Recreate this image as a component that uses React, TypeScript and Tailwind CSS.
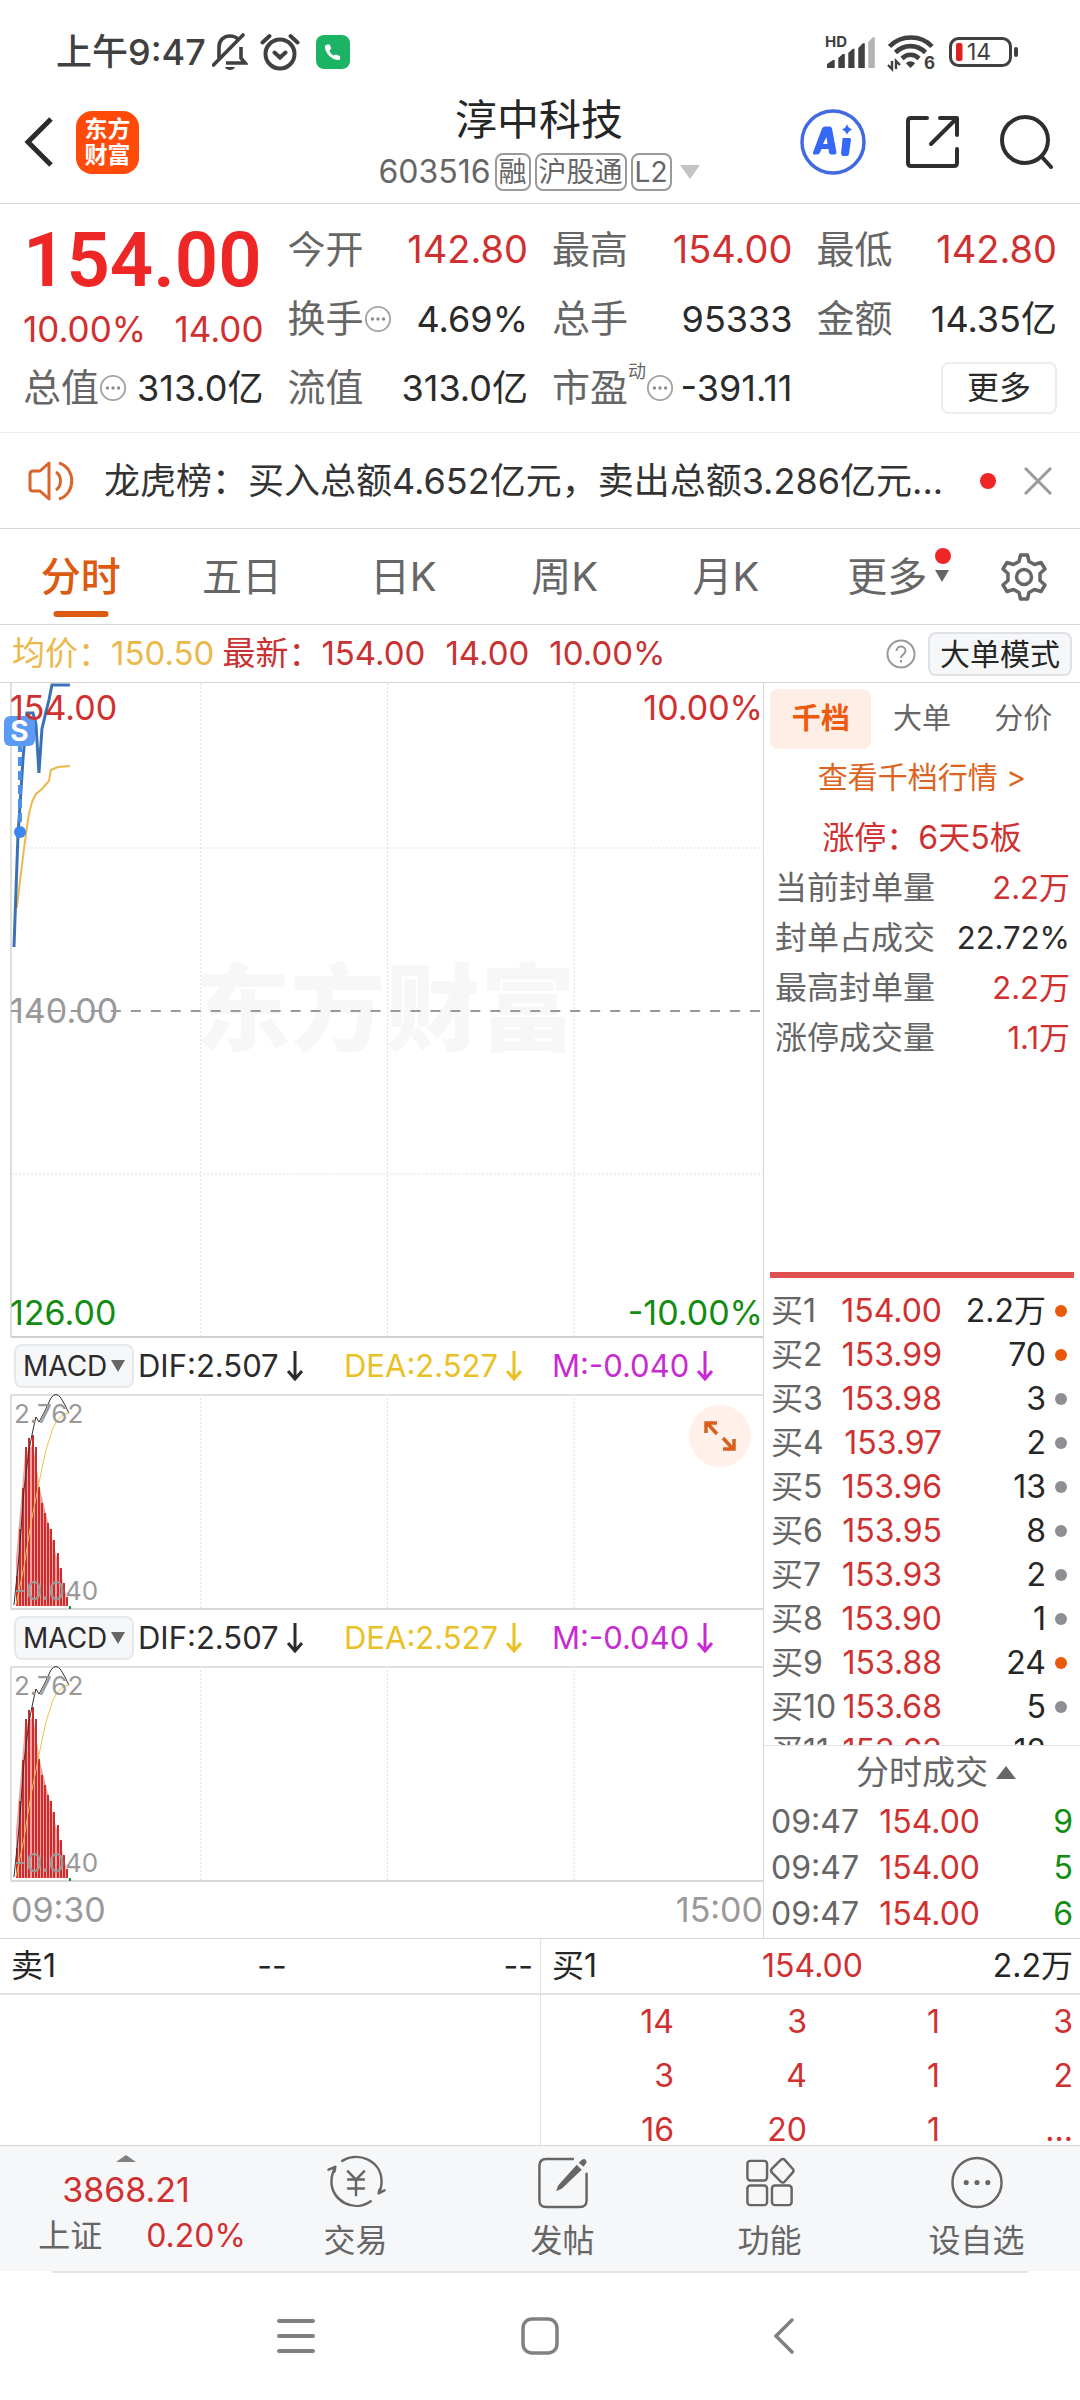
import { useState } from "react";
import type { ReactNode } from "react";
import clsx from "clsx";

const PERIODS = ["分时", "五日", "日K", "周K", "月K"];

const SEAL_STATS = [
  { label: "当前封单量", value: "2.2万", up: true },
  { label: "封单占成交", value: "22.72%", up: false },
  { label: "最高封单量", value: "2.2万", up: true },
  { label: "涨停成交量", value: "1.1万", up: true },
];

const BIDS = [
  { level: "买1", price: "154.00", volume: "2.2万", big: true },
  { level: "买2", price: "153.99", volume: "70", big: true },
  { level: "买3", price: "153.98", volume: "3", big: false },
  { level: "买4", price: "153.97", volume: "2", big: false },
  { level: "买5", price: "153.96", volume: "13", big: false },
  { level: "买6", price: "153.95", volume: "8", big: false },
  { level: "买7", price: "153.93", volume: "2", big: false },
  { level: "买8", price: "153.90", volume: "1", big: false },
  { level: "买9", price: "153.88", volume: "24", big: true },
  { level: "买10", price: "153.68", volume: "5", big: false },
  { level: "买11", price: "153.63", volume: "12", big: false },
];

const TRADES = [
  { time: "09:47", price: "154.00", volume: "9" },
  { time: "09:47", price: "154.00", volume: "5" },
  { time: "09:47", price: "154.00", volume: "6" },
];

const QUEUE = [
  ["14", "3", "1", "3"],
  ["3", "4", "1", "2"],
  ["16", "20", "1", "..."],
];

// top edge of each MACD bar, baseline is at 212
const MACD_BARS = [
  182, 135, 94, 53, 44, 41, 53, 93, 109, 119, 129, 135, 146, 159, 174, 189, 203,
];

function MoreInfo() {
  return (
    <svg viewBox="0 0 30 30" className="h-7 w-7 shrink-0" aria-hidden="true">
      <circle cx="15" cy="15" r="13" fill="none" stroke="#a3a3a3" strokeWidth="2" />
      <g fill="#8c8c8c">
        <circle cx="9" cy="15" r="1.8" />
        <circle cx="15" cy="15" r="1.8" />
        <circle cx="21" cy="15" r="1.8" />
      </g>
    </svg>
  );
}

function StatusBar() {
  return (
    <div className="flex h-[94px] items-center justify-between pt-[10px] pr-[61px] pl-14 text-[#404040]">
      <div className="flex items-center">
        <span className="text-[36px] leading-10 font-medium">上午9:47</span>
        <svg viewBox="0 0 36 38" className="ml-[6px] h-[38px] w-9" fill="none" stroke="#404040" strokeWidth="3.6" aria-hidden="true">
          <path d="M7 25V14C7 7 12 3 18 3c3 0 6 1 8 3" />
          <path d="M29 14v11l4 5H14" />
          <path d="M1.5 32 31 2" strokeLinecap="round" />
          <path d="M13 34h10c-1 4-9 4-10 0z" fill="#404040" stroke="none" />
        </svg>
        <svg viewBox="0 0 40 38" className="ml-3 h-[38px] w-10" fill="none" stroke="#404040" strokeWidth="4" strokeLinecap="round" aria-hidden="true">
          <circle cx="20" cy="21" r="14.5" />
          <path d="m14.5 19.500 5.500 5 5.500-5M2.500 9.500 9.500 3M37.500 9.500 30.500 3" />
        </svg>
        <svg viewBox="0 0 34 34" className="ml-4 h-[34px] w-[34px]" aria-hidden="true">
          <rect width="34" height="34" rx="8" fill="#1cb464" />
          <path d="M9 11.500c-.5 6 7 14 14 13.500 1.500-.5 1.500-3 .7-4l-3.700-1.500-2.500 1c-2-1-3.500-3-4-5l1.700-2-1.200-3.500c-1-1-4.500-.5-5 1.500z" fill="#fff" />
        </svg>
      </div>
      <div className="flex items-center">
        <svg viewBox="0 0 50 34" className="h-[34px] w-[50px] overflow-visible" fill="#404040" aria-hidden="true">
          <text x="0" y="12" fontSize="15" fontWeight="700">HD</text>
          <path d="M2 33v-4l6-4h1.700v8zM13.300 33V23l4.500-4h2v14zM23.300 33V18l4.500-4.300h1.700V33zM33.300 33V13l4.500-4.700h2V33z" />
          <path d="M43.300 33V7l4.500-4.700h2V33z" fill="#b3b3b3" />
        </svg>
        <svg viewBox="0 0 48 36" className="ml-3 h-9 w-12 overflow-visible" fill="none" stroke="#404040" strokeWidth="4.600" aria-hidden="true">
          <path d="M2.500 12.500C14 .5 34 .5 45 12.500" />
          <path d="M8.500 18.500C17 10 30 10 38.500 18.500" />
          <path d="M15 24.500c5-5 12-5 17 0" />
          <path d="m23.500 34-4.500-4.500c2-3 7-3 9 0z" fill="#404040" stroke="none" />
          <path d="M5 27v8L1 31M9 35v-8l4 4" strokeWidth="2.400" />
          <text x="37" y="35" fontSize="17" fontWeight="700" fill="#404040" stroke="none">6</text>
        </svg>
        <svg viewBox="0 0 70 32" className="ml-[14px] h-8 w-[70px]" aria-hidden="true">
          <rect x="1.500" y="2.500" width="60" height="27" rx="8" fill="none" stroke="#404040" strokeWidth="3" />
          <rect x="65" y="11" width="4" height="10" rx="2" fill="#404040" />
          <rect x="7" y="7" width="6.500" height="18" rx="2" fill="#e02020" />
          <text x="18" y="24" fontSize="23" fill="#404040">14</text>
        </svg>
      </div>
    </div>
  );
}

function Header() {
  return (
    <header className="grid grid-cols-[1fr_auto_1fr] border-b border-[#d6d6d6] pr-[26px] pb-[5px] pl-6">
      <div className="flex h-24 items-center gap-[22px]">
        <button aria-label="返回">
          <svg viewBox="0 0 30 52" className="h-[52px] w-[30px]" fill="none" stroke="#2b2b2b" strokeWidth="5">
            <path d="M27 3 4 26l23 23" />
          </svg>
        </button>
        <button className="flex h-[63px] w-[63px] flex-col items-center justify-center rounded-2xl bg-[#ff4a0a] text-[23px] leading-[26px] font-bold text-white">
          <span>东方</span>
          <span>财富</span>
        </button>
      </div>
      <div className="flex flex-col items-center">
        <h1 className="text-[42px] leading-[52px] text-[#262626]">淳中科技</h1>
        <div className="flex h-[52px] items-center gap-1 text-[#666666]">
          <span className="text-[32px] leading-10">603516</span>
          {["融", "沪股通", "L2"].map((tag) => (
            <span key={tag} className="rounded-lg border-2 border-[#9a9a9a] px-[2px] text-[28px] leading-[34px]">
              {tag}
            </span>
          ))}
          <svg viewBox="0 0 20 14" className="ml-1 h-[14px] w-5" aria-hidden="true">
            <path d="M0 0h20L10 14z" fill="#c4c4c4" />
          </svg>
        </div>
      </div>
      <div className="flex h-24 items-center justify-end gap-10">
        <button aria-label="AI">
          <svg viewBox="0 0 66 66" className="h-[66px] w-[66px]" fill="#3568f5">
            <circle cx="33" cy="33" r="31" fill="none" stroke="#4169e1" strokeWidth="3.500" />
            <path
              fillRule="evenodd"
              d="M13 43.500 22 19.500q1-2 3-2h4.500q2 0 2.500 2l4.500 24q0 2-2 2h-3.500q-1.500 0-2-2l-.5-3.500h-7l-1.500 3.500q-1 2-2.500 2H14q-1.500 0-1-2zm10-8.500h4.500l-1-7z"
            />
            <path d="M42.500 29h7q1.500 0 1.500 1.500l-2 14.500q-.5 2-2 2h-4q-2 0-1.500-2l-.5-.5 1.500-14q0-1.500 0-1.500zM47 15q1 4 5 5.500-4 1.500-5 5.500-1-4-5-5.500 4-1.500 5-5.500z" />
          </svg>
        </button>
        <button aria-label="分享">
          <svg viewBox="0 0 54 54" className="h-[54px] w-[54px]" fill="none" stroke="#2e2e2e" strokeWidth="4" strokeLinecap="round" strokeLinejoin="round">
            <path d="M21 3H5q-3 0-3 3v42q0 3 3 3h43q3 0 3-3V34M34 3h17v17M50 4 25 29" />
          </svg>
        </button>
        <button aria-label="搜索">
          <svg viewBox="0 0 54 54" className="h-[54px] w-[54px]" fill="none" stroke="#2e2e2e" strokeWidth="4" strokeLinecap="round">
            <circle cx="25" cy="25" r="23" />
            <path d="m42 42 9 10" />
          </svg>
        </button>
      </div>
    </header>
  );
}

interface QuoteItemProps {
  label: ReactNode;
  value: string;
  up?: boolean;
  info?: boolean;
}

function QuoteItem({ label, value, up, info }: QuoteItemProps) {
  return (
    <div className="flex h-[69px] items-center justify-between whitespace-nowrap">
      <span className="flex items-center text-[38px] text-[#666666]">
        {label}
        {info && <MoreInfo />}
      </span>
      <span className={clsx(up ? "text-[38px] text-[#d03030]" : "text-[36px] text-[#2b2b2b]")}>{value}</span>
    </div>
  );
}

function Quote() {
  return (
    <section className="grid grid-cols-4 gap-x-6 border-b border-[#ececec] px-[23px] pt-[11px] pb-[10px]">
      <div className="row-span-2 flex flex-col">
        <strong className="font-[Roboto] text-[76px] leading-[90px] font-semibold text-[#ee2626]">154.00</strong>
        <div className="flex h-12 items-center justify-between text-[35px] text-[#d03030]">
          <span>10.00%</span>
          <span>14.00</span>
        </div>
      </div>
      <QuoteItem label="今开" value="142.80" up />
      <QuoteItem label="最高" value="154.00" up />
      <QuoteItem label="最低" value="142.80" up />
      <QuoteItem label="换手" value="4.69%" info />
      <QuoteItem label="总手" value="95333" />
      <QuoteItem label="金额" value="14.35亿" />
      <QuoteItem label="总值" value="313.0亿" info />
      <QuoteItem label="流值" value="313.0亿" />
      <QuoteItem
        label={
          <>
            市盈<sup className="top-0 mb-8 text-[18px]">动</sup>
          </>
        }
        value="-391.11"
        info
      />
      <div className="flex items-center justify-end">
        <button className="rounded-lg border-2 border-[#ececec] px-6 text-[32px] leading-12 text-[#2b2b2b]">更多</button>
      </div>
    </section>
  );
}

function NewsBar({ onClose }: { onClose: () => void }) {
  return (
    <section className="flex h-24 items-center border-b border-[#d6d6d6] pr-7 pl-7">
      <svg viewBox="0 0 46 40" className="h-10 w-[46px]" fill="none" stroke="#d9652a" strokeWidth="3" strokeLinejoin="round" aria-hidden="true">
        <path d="M21 2v36l-9-8H5q-3 0-3-3V13q0-3 3-3h7zM28 11c6 4 6 14 0 18M31 2c17 5 17 31 0 36" />
      </svg>
      <a href="#news" className="ml-[30px] flex-1 truncate text-[36px] text-[#333333]">
        龙虎榜：买入总额4.652亿元，卖出总额3.286亿元...
      </a>
      <span className="mx-7 h-4 w-4 rounded-full bg-[#ee2626]" />
      <button onClick={onClose} aria-label="关闭">
        <svg viewBox="0 0 28 28" className="h-7 w-7" stroke="#9a9a9a" strokeWidth="3">
          <path d="m1 1 26 26M27 1 1 27" />
        </svg>
      </button>
    </section>
  );
}

function PeriodTabs() {
  const [active, setActive] = useState("分时");

  return (
    <nav className="flex h-24 border-b border-[#d6d6d6] text-[40px] text-[#666666]">
      {PERIODS.map((period) => (
        <button
          key={period}
          onClick={() => setActive(period)}
          className={clsx("relative flex-1", active === period && "font-medium text-[#dd5a10]")}
        >
          {period}
          {active === period && (
            <span className="absolute bottom-[7px] left-1/2 h-[6px] w-[55px] -translate-x-1/2 rounded-full bg-[#dd5a10]" />
          )}
        </button>
      ))}
      <button className="flex-1">
        <span className="relative">
          更多
          <svg viewBox="0 0 14 12" className="absolute top-1/2 left-full ml-2 h-3 w-[14px] -translate-y-1/2" aria-hidden="true">
            <path d="M0 0h14L7 12z" fill="#666" />
          </svg>
          <span className="absolute -top-1 left-full ml-2 h-4 w-4 rounded-full bg-[#ee2626]" />
        </span>
      </button>
      <button className="flex w-[112px] items-center justify-center" aria-label="设置">
        <svg viewBox="0 0 48 48" className="h-12 w-12" fill="none" stroke="#666" strokeWidth="3.500" strokeLinejoin="round">
          <path d="M20.500 2h7l1.500 6.500 5.500 3 6.500-2 4 6.500-5 4.500v7l5 4.500-4 6.500-6.500-2-5.500 3-1.500 6.500h-7L19 39.500l-5.500-3-6.500 2L3 32l5-4.500v-7L3 16l4-6.500 6.500 2 5.500-3z" />
          <circle cx="24" cy="24" r="7.500" />
        </svg>
      </button>
    </nav>
  );
}

function PriceBar() {
  return (
    <div className="flex h-[58px] items-center justify-between border-b border-[#d6d6d6] pr-2 pl-3 text-[33px] whitespace-nowrap">
      <div className="flex text-[#c83232]">
        <span className="text-[#ecb84c]">均价：150.50</span>
        <span className="ml-2">最新：154.00</span>
        <span className="ml-5">14.00</span>
        <span className="ml-5">10.00%</span>
      </div>
      <div className="flex items-center gap-3">
        <svg viewBox="0 0 30 30" className="h-[30px] w-[30px]" fill="none" stroke="#999" strokeWidth="2" aria-label="帮助">
          <circle cx="15" cy="15" r="13.500" />
          <path d="M10.500 12c0-6 9-6 9 0 0 3-4.500 3.500-4.500 7M15 21v2.500" />
        </svg>
        <button className="rounded-lg border-2 border-[#dfe1e5] bg-[#f6f7f9] px-[10px] text-[30px] leading-10 text-[#262626]">大单模式</button>
      </div>
    </div>
  );
}

function PriceChart() {
  return (
    <div className="relative h-[655px]">
      <div className="absolute inset-0 flex items-center justify-center pl-2 text-[95px] font-black text-[#f7f7f7]">
        <span>东方财富</span>
      </div>
      <svg viewBox="0 0 764 655" preserveAspectRatio="none" className="absolute inset-0 h-full w-full" fill="none" aria-label="分时走势">
        <path d="M201 0v654M388 0v654M575 0v654M11 165h753M11 491h753" stroke="#dedede" strokeDasharray="2 2" />
        <path d="M11 0v654" stroke="#dedede" strokeWidth="2" />
        <path d="M11 654h753" stroke="#d0d0d0" strokeWidth="2" />
        <path d="M11 328h753" stroke="#999" strokeWidth="2" strokeDasharray="10 10" />
        <path
          d="M16 225 17 224 20 198 24 166 27 144 29 131 32 119 36 111 42 106 49 98 51 87 58 84 70 83"
          stroke="#ecb84c"
          strokeWidth="2"
        />
        <path
          d="M14 264 18 152 21 108 23 76 25 54 27 30 33 30 36 41 39 90 42 46 46 29 49 17 52 2 70 2"
          stroke="#3a72b5"
          strokeWidth="3"
        />
        <path d="M20 60v85" stroke="#4a90ee" strokeWidth="4" strokeDasharray="9 5" />
        <circle cx="20" cy="149" r="6" fill="#3d85f0" />
      </svg>
      <span className="absolute top-[33px] left-1 flex h-[30px] w-[31px] items-center justify-center rounded-md bg-[#5b9bf5] text-[28px] font-bold text-white">
        S
      </span>
      <div className="absolute inset-0 flex flex-col justify-between pl-[10px] text-[34px] leading-[50px]">
        <div className="flex justify-between text-[#d03030]">
          <span>154.00</span>
          <span>10.00%</span>
        </div>
        <span className="text-[#999999]">140.00</span>
        <div className="flex justify-between text-[#128c12]">
          <span>126.00</span>
          <span>-10.00%</span>
        </div>
      </div>
    </div>
  );
}

function DownArrow() {
  return (
    <svg viewBox="0 0 16 30" className="ml-2 h-[30px] w-4" fill="none" stroke="currentColor" strokeWidth="3" aria-hidden="true">
      <path d="M8 0v28M1 20l7 8 7-8" />
    </svg>
  );
}

function MacdPanel({ expandable }: { expandable?: boolean }) {
  return (
    <section>
      <div className="flex h-14 items-center pl-[14px] text-[31px] whitespace-nowrap text-[#2b2b2b]">
        <button className="flex w-[120px] items-center justify-between rounded-lg border-2 border-[#e6e8ec] bg-[#f6f7f9] px-[7px] text-[28px] leading-10">
          MACD
          <svg viewBox="0 0 14 12" className="h-3 w-[14px]" aria-hidden="true">
            <path d="M0 0h14L7 12z" fill="#666" />
          </svg>
        </button>
        <span className="ml-1 flex w-[206px] items-center">
          DIF:2.507
          <DownArrow />
        </span>
        <span className="flex w-[208px] items-center text-[#eac024]">
          DEA:2.527
          <DownArrow />
        </span>
        <span className="flex items-center text-[#c62cd0]">
          M:-0.040
          <DownArrow />
        </span>
      </div>
      <div className="relative h-[216px]">
        <svg viewBox="0 0 764 216" preserveAspectRatio="none" className="absolute inset-0 h-full w-full" fill="none" aria-label="MACD">
          <path d="M11 1h753M11 0v215" stroke="#e0e0e0" strokeWidth="2" />
          <path d="M201 0v214M388 0v214M575 0v214" stroke="#dedede" strokeDasharray="2 2" />
          <path d="M11 215h753" stroke="#d8d8d8" strokeWidth="2" />
          <path d="M16 212V165L25 60 33 50 40 95 66 200v12z" fill="#f2a0a0" />
          {MACD_BARS.map((top, i) => (
            <rect key={i} x={16 + i * 3.13} y={top} width="2" height={212 - top} fill="#cc2c2c" shapeRendering="crispEdges" />
          ))}
          <path d="M70 212v3" stroke="#128c12" strokeWidth="2" />
          <path d="M14 211 19 163 24 96 29 56 33 36 36 23 39 28 44 19 51 4Q56-3 61 4L65 11 69 19" stroke="#333" />
          <path d="M16 211 24 173 31 129 39 89 46 56 53 34Q60 19 69 19" stroke="#ecc440" />
        </svg>
        <div className="absolute inset-0 flex flex-col justify-between pt-1 pb-[3px] pl-[14px] text-[26px] leading-8 text-[#999999]">
          <span>2.762</span>
          <span>-0.040</span>
        </div>
        {expandable && (
          <button
            className="absolute top-[11px] right-3 flex h-[62px] w-[62px] items-center justify-center rounded-full bg-[#fff1e9]"
            aria-label="放大"
          >
            <svg viewBox="0 0 34 34" className="h-[34px] w-[34px]" fill="none" stroke="#d9601c" strokeWidth="3.500">
              <path d="M3 14V4h11M4 4l10 11M31 20v10H20M30 30 20 19" />
            </svg>
          </button>
        )}
      </div>
    </section>
  );
}

function OrderPanel() {
  const [tab, setTab] = useState("千档");

  return (
    <aside className="w-[316px] shrink-0 text-[32px] whitespace-nowrap">
      <div className="flex px-[6px] pt-[6px] text-[29px] text-[#666666]">
        {["千档", "大单", "分价"].map((name) => (
          <button
            key={name}
            onClick={() => setTab(name)}
            className={clsx("flex-1 rounded-lg leading-[60px]", tab === name && "bg-[#ffeee6] font-bold text-[#ee5a10]")}
          >
            {name}
          </button>
        ))}
      </div>
      <a href="#depth" className="block text-center text-[30px] leading-14 text-[#dd6420]">
        查看千档行情 &gt;
      </a>
      <div className="mt-2 text-center leading-[50px] text-[#d03030]">涨停：6天5板</div>
      <dl className="pr-[10px] pl-[11px]">
        {SEAL_STATS.map((stat) => (
          <div key={stat.label} className="flex justify-between leading-[50px]">
            <dt className="text-[#666666]">{stat.label}</dt>
            <dd className={clsx("text-[31px]", stat.up ? "text-[#d03030]" : "text-[#2b2b2b]")}>{stat.value}</dd>
          </div>
        ))}
      </dl>
      <div className="mx-[6px] mt-[209px] h-[6px] bg-[#e05050]" />
      <div className="mt-[11px] h-[457px] overflow-hidden border-b border-[#e4e4e4]">
        <table className="w-full table-fixed">
          <colgroup>
            <col className="w-[76px]" />
            <col className="w-[102px]" />
            <col />
            <col className="w-[34px]" />
          </colgroup>
          <tbody>
            {BIDS.map((bid) => (
              <tr key={bid.level} className="leading-[44px]">
                <td className="p-0 pl-[7px] text-[#666666]">{bid.level}</td>
                <td className="p-0 text-right text-[#d03030]">{bid.price}</td>
                <td className="p-0 text-right text-[#262626]">{bid.volume}</td>
                <td className="p-0 pl-[9px]">
                  <span className={clsx("block h-3 w-3 rounded-full", bid.big ? "bg-[#e8590c]" : "bg-[#8e8e93]")} />
                </td>
              </tr>
            ))}
          </tbody>
        </table>
      </div>
      <button className="flex h-[53px] w-full items-center justify-center gap-2 pl-7 text-[33px] text-[#666666]">
        分时成交
        <svg viewBox="0 0 20 13" className="h-[13px] w-5" aria-hidden="true">
          <path d="M0 13h20L10 0z" fill="#666" />
        </svg>
      </button>
      <table className="w-full">
        <tbody>
          {TRADES.map((trade, i) => (
            <tr key={i} className="leading-[46px]">
              <td className="p-0 pl-[7px] text-[#666666]">{trade.time}</td>
              <td className="p-0 text-right text-[#d03030]">{trade.price}</td>
              <td className="w-[100px] p-0 pr-[7px] text-right text-[#128c12]">{trade.volume}</td>
            </tr>
          ))}
        </tbody>
      </table>
    </aside>
  );
}

function QueueSection() {
  return (
    <section className="grid grid-cols-2 border-t border-[#d6d6d6] text-[32px] text-[#262626]">
      <div>
        <div className="grid h-[56px] grid-cols-3 items-center border-b-2 border-[#e2e2e2] pr-[7px] pl-[11px]">
          <span>卖1</span>
          <span className="text-center">--</span>
          <span className="text-right">--</span>
        </div>
      </div>
      <div className="border-l border-[#e2e2e2]">
        <div className="grid h-[56px] grid-cols-3 items-center border-b-2 border-[#e2e2e2] pr-[7px] pl-[11px]">
          <span>买1</span>
          <span className="text-center text-[#d03030]">154.00</span>
          <span className="text-right">2.2万</span>
        </div>
        <div className="h-[150px] overflow-hidden pr-[7px]">
          <table className="w-full table-fixed text-right text-[#d03030]">
            <tbody>
              {QUEUE.map((row, i) => (
                <tr key={i} className="leading-[54px]">
                  {row.map((cell, j) => (
                    <td key={j} className="p-0">
                      {cell}
                    </td>
                  ))}
                </tr>
              ))}
            </tbody>
          </table>
        </div>
      </div>
    </section>
  );
}

function NavButton({ label, children }: { label: string; children: ReactNode }) {
  return (
    <button className="flex w-[207px] flex-col items-center pt-2 text-[32px] leading-[60px] text-[#666666]">
      <svg viewBox="0 0 60 58" className="h-[58px] w-[60px]" fill="none" stroke="#666" strokeWidth="2.500" strokeLinecap="round" strokeLinejoin="round" aria-hidden="true">
        {children}
      </svg>
      {label}
    </button>
  );
}

function BottomNav() {
  return (
    <nav className="flex h-[126px] border-t border-[#d6d6d6] bg-[#f6f7f9]">
      <button className="flex flex-1 flex-col items-center pt-[9px] text-[#d03030]">
        <svg viewBox="0 0 20 7" className="h-[7px] w-5" aria-hidden="true">
          <path d="M0 7h20L10 0z" fill="#808080" />
        </svg>
        <span className="pt-1 text-[34px] leading-[48px]">3868.21</span>
        <span className="flex gap-11 pl-8 text-[32px] leading-[44px]">
          <span className="text-[#666666]">上证</span>
          <span>0.20%</span>
        </span>
      </button>
      <NavButton label="交易">
        <path d="M16 7C31-3 56 6 56 28c0 5-1 9-3 12M53 40l6-3M53 40l1-4" />
        <path d="M45 48C28 60 5 48 5 28c0-6 2-11 4-15M9 13l-1 5M9 13l-7 3" />
        <path d="M21 17l9 9 9-9M30 26v17M21 26h18M21 35h18" strokeLinecap="butt" />
      </NavButton>
      <NavButton label="发帖">
        <path d="M40 5H13q-7 0-7 7v35q0 7 7 7h34q7 0 7-7V20" />
        <path d="M44 11l5 5-20 19-6 3 2-6zM46 9l3-3q3-2 4 0 2 2 0 4l-2 3z" fill="#666" stroke="none" />
      </NavButton>
      <NavButton label="功能">
        <rect x="7" y="7" width="20" height="20" rx="3" />
        <rect x="7" y="32" width="20" height="20" rx="3" />
        <rect x="32" y="32" width="20" height="20" rx="3" />
        <path d="m41 6-9 9q-2 2 0 4l9 9q2 2 4 0l8-9q2-2 0-4l-8-9q-2-2-4 0z" />
      </NavButton>
      <NavButton label="设自选">
        <circle cx="30" cy="29" r="25" />
        <g fill="#666" stroke="none">
          <circle cx="19" cy="29" r="2.600" />
          <circle cx="30" cy="29" r="2.600" />
          <circle cx="41" cy="29" r="2.600" />
        </g>
      </NavButton>
    </nav>
  );
}

function SystemNav() {
  return (
    <div className="mx-[52px] flex h-[129px] items-center justify-center border-t-2 border-[#e4e4e4] pb-[2px]">
      <button className="flex w-[244px] justify-center" aria-label="最近任务">
        <svg viewBox="0 0 38 34" className="h-[34px] w-[38px]" stroke="#808080" strokeWidth="4" strokeLinecap="round">
          <path d="M2 2h34M2 17h34M2 32h34" />
        </svg>
      </button>
      <button className="flex w-[244px] justify-center" aria-label="主页">
        <svg viewBox="0 0 38 38" className="h-[38px] w-[38px]" fill="none" stroke="#808080" strokeWidth="3.500">
          <rect x="2" y="2" width="34" height="34" rx="9" />
        </svg>
      </button>
      <button className="flex w-[244px] justify-center" aria-label="返回">
        <svg viewBox="0 0 20 36" className="h-9 w-5" fill="none" stroke="#808080" strokeWidth="3.500" strokeLinecap="round">
          <path d="M18 2 2 18l16 16" />
        </svg>
      </button>
    </div>
  );
}

export default function App() {
  const [showNews, setShowNews] = useState(true);

  return (
    <div lang="zh-CN" className="w-full overflow-hidden bg-white font-['Inter','Noto_Sans_CJK_SC',sans-serif]">
      <StatusBar />
      <Header />
      <main>
        <Quote />
        {showNews && <NewsBar onClose={() => setShowNews(false)} />}
        <PeriodTabs />
        <PriceBar />
        <div className="flex">
          <div className="min-w-0 flex-1 border-r border-[#d6d6d6]">
            <PriceChart />
            <MacdPanel expandable />
            <MacdPanel />
            <div className="flex justify-between pl-[11px] text-[34px] leading-14 text-[#999999]">
              <span>09:30</span>
              <span>15:00</span>
            </div>
          </div>
          <OrderPanel />
        </div>
        <QueueSection />
      </main>
      <BottomNav />
      <SystemNav />
    </div>
  );
}
